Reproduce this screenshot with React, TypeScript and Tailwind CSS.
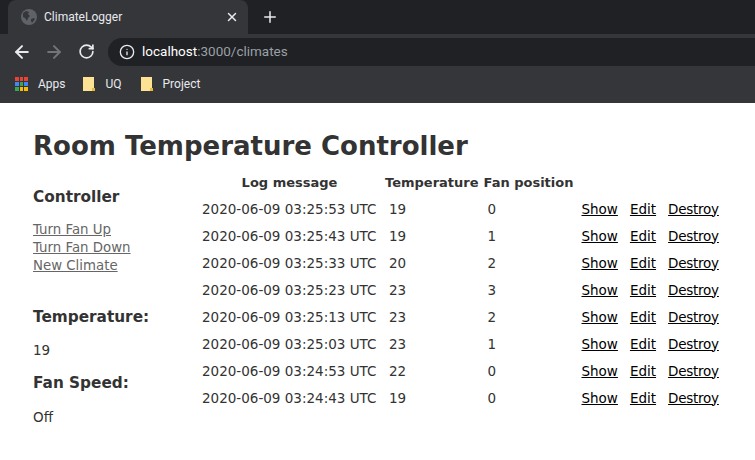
import { ArrowLeft, ArrowRight, Info, Plus, RotateCw, X } from "lucide-react";

const rows = [
  { time: "2020-06-09 03:25:53 UTC", temp: 19, fan: 0 },
  { time: "2020-06-09 03:25:43 UTC", temp: 19, fan: 1 },
  { time: "2020-06-09 03:25:33 UTC", temp: 20, fan: 2 },
  { time: "2020-06-09 03:25:23 UTC", temp: 23, fan: 3 },
  { time: "2020-06-09 03:25:13 UTC", temp: 23, fan: 2 },
  { time: "2020-06-09 03:25:03 UTC", temp: 23, fan: 1 },
  { time: "2020-06-09 03:24:53 UTC", temp: 22, fan: 0 },
  { time: "2020-06-09 03:24:43 UTC", temp: 19, fan: 0 },
];

const Globe = () => (
  <svg width="16" height="16" viewBox="0 0 16 16">
    <circle cx="8" cy="8" r="8" fill="#5f6368" />
    <path d="M2 4l3-2 3 1-1 2 2 2-2 2-1 3-2-3-2-1zM10 10l3-1 1 1-3 4-1-2z" fill="#35363a" />
  </svg>
);

const Folder = () => (
  <svg width="12" height="14" viewBox="0 0 12 14">
    <path d="M0 0h11v11l1 0v3H0z" fill="#fde293" />
    <path d="M9 11h3v3H9z" fill="#e8b93c" />
  </svg>
);

const AppsIcon = () => {
  const colors = ["#ea4335", "#ea4335", "#ea4335", "#4285f4", "#34a853", "#4285f4", "#34a853", "#fbbc04", "#fbbc04"];
  return (
    <div className="grid grid-cols-3 gap-[1px] w-[13px]">
      {colors.map((color, idx) => (
        <span key={idx} className="w-[3.66px] h-[4px]" style={{ backgroundColor: color }} />
      ))}
    </div>
  );
};

const Browser = () => (
  <div className="h-[103px] shrink-0 bg-[#35363a] font-['Roboto',sans-serif] text-[12px] text-[#e8eaed]">
    <div className="flex h-[34px] bg-[#202124]">
      <div className="w-2 h-full" />
      <div className="flex items-center w-[240px] h-full rounded-t-lg bg-[#35363a] pl-[13px] pr-[9px]">
        <Globe />
        <span className="ml-[7px] flex-1">ClimateLogger</span>
        <X size={14} strokeWidth={2.5} color="#e8eaed" />
      </div>
      <div className="flex items-center ml-[13px]">
        <Plus size={18} strokeWidth={2} color="#e8eaed" />
      </div>
    </div>
    <div className="flex items-center h-[34px] pl-[12px] pt-[1px]">
      <ArrowLeft size={20} strokeWidth={2.4} color="#e8eaed" />
      <ArrowRight size={20} strokeWidth={2.4} color="#727578" className="ml-[12px]" />
      <RotateCw size={17} strokeWidth={2.4} color="#e8eaed" className="ml-[14px]" />
      <div className="flex items-center flex-1 h-[28px] ml-[13px] rounded-l-full bg-[#202124] pl-[11px] text-[13.5px]">
        <Info size={16} strokeWidth={2} color="#e8eaed" />
        <span className="ml-[7px] text-white">localhost</span>
        <span className="text-[#9aa0a6]">:3000/climates</span>
      </div>
    </div>
    <div className="flex items-center h-[32px] pl-[15px]">
      <AppsIcon />
      <span className="ml-[10px]">Apps</span>
      <div className="ml-[17px] flex items-center">
        <Folder />
        <span className="ml-[11px]">UQ</span>
      </div>
      <div className="ml-[19px] flex items-center">
        <Folder />
        <span className="ml-[10px]">Project</span>
      </div>
    </div>
  </div>
);

const Sidebar = () => (
  <div className="w-[168px] shrink-0 pt-[19px]">
    <h3 className="text-[15.3px] leading-[18px] font-bold">Controller</h3>
    <div className="mt-[15px] flex flex-col text-[13.33px] leading-[18px] text-[#666]">
      <a href="#" className="underline">Turn Fan Up</a>
      <a href="#" className="underline">Turn Fan Down</a>
      <a href="#" className="underline">New Climate</a>
    </div>
    <h3 className="mt-[33px] text-[15.3px] leading-[18px] font-bold">Temperature:</h3>
    <p className="mt-[15px] text-[13.5px] leading-[18px]">19</p>
    <h3 className="mt-[15px] text-[15.3px] leading-[18px] font-bold">Fan Speed:</h3>
    <p className="mt-[16px] text-[13.5px] leading-[18px]">Off</p>
  </div>
);

const ClimateTable = () => (
  <table className="self-start border-separate border-spacing-0 text-[13.5px] leading-[18px] mt-[1px]">
    <thead>
      <tr className="h-[25px] text-[13px]">
        <th className="w-[180px] pr-[3px] font-bold text-center">Log message</th>
        <th className="pl-[4px] pr-[2px] font-bold text-center">Temperature</th>
        <th className="pl-[3px] pr-[4px] font-bold text-center">Fan position</th>
        <th colSpan={3} />
      </tr>
    </thead>
    <tbody>
      {rows.map((row, idx) => (
        <tr key={idx} className="h-[27px]">
          <td className="pl-[1px]">{row.time}</td>
          <td className="pl-[8px]">{row.temp}</td>
          <td className="pl-[7px]">{row.fan}</td>
          <td className="pl-[4px]"><a href="#" className="underline text-black">Show</a></td>
          <td className="pl-[12px]"><a href="#" className="underline text-black">Edit</a></td>
          <td className="pl-[12px] tracking-[-0.25px]"><a href="#" className="underline text-black">Destroy</a></td>
        </tr>
      ))}
    </tbody>
  </table>
);

export default function App() {
  return (
    <div className="flex flex-col w-[755px] h-[460px] overflow-hidden bg-white font-['DejaVu_Sans',sans-serif] text-[#333]">
      <Browser />
      <div className="pl-[33px] pt-[26px]">
        <h1 className="text-[26px] leading-[34px] font-bold">Room Temperature Controller</h1>
        <div className="flex mt-[6px]">
          <Sidebar />
          <ClimateTable />
        </div>
      </div>
    </div>
  );
}
